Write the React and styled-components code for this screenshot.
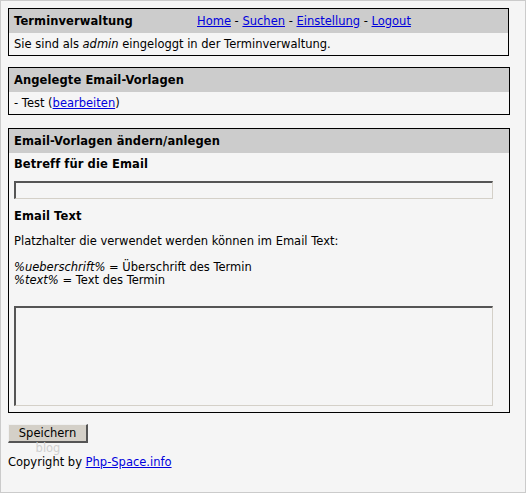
import React from 'react';
import styled, { createGlobalStyle } from 'styled-components';

const Global = createGlobalStyle`
  html, body {
    margin: 0;
    padding: 0;
    background: #f5f5f5;
  }
  body {
    font-family: Verdana, "DejaVu Sans", sans-serif;
    font-size: 11.5px;
    line-height: 13px;
    color: #000;
  }
`;

const Page = styled.div`
  box-sizing: border-box;
  min-height: 100vh;
  border: 1px solid #cbcbcb;
  padding: 7px;
  display: flex;
  flex-direction: column;
`;

const Box = styled.div`
  width: ${props => props.width || 502}px;
  box-sizing: border-box;
  border: 1px solid #000;
  margin-bottom: ${props => props.gap || 0}px;
`;

const Head = styled.div`
  height: 24px;
  background: #cccccc;
  display: flex;
  align-items: center;
  padding: 0 5px;
  font-weight: bold;
  letter-spacing: 0.1px;
`;

const Title = styled.span`
  width: 183px;
`;

const Nav = styled.span`
  font-weight: normal;
  letter-spacing: 0;
`;

const Link = styled.a`
  color: #0000dd;
  text-decoration: underline;
`;

const Row = styled.div`
  height: 22px;
  display: flex;
  align-items: center;
  padding: 0 5px;
`;

const Form = styled.div`
  display: flex;
  flex-direction: column;
  padding: 5px 5px 6px;
`;

const Label = styled.div`
  font-weight: bold;
  letter-spacing: 0.1px;
  margin-bottom: ${props => props.gap}px;
`;

const Text = styled.div`
  margin-bottom: ${props => props.gap || 0}px;
`;

const Field = styled.input`
  box-sizing: border-box;
  width: 479px;
  height: 18px;
  margin: 0 0 11px;
  padding: 0 2px;
  background: #f5f5f5;
  border-style: solid;
  border-width: 2px 1px 1px 2px;
  border-color: #555 #d4d0c8 #d4d0c8 #555;
  font: inherit;
`;

const Area = styled.textarea`
  box-sizing: border-box;
  width: 479px;
  height: 100px;
  margin: 0;
  padding: 2px;
  background: #f5f5f5;
  border-style: solid;
  border-width: 2px 1px 1px 2px;
  border-color: #555 #d4d0c8 #d4d0c8 #555;
  font: inherit;
  resize: none;
  display: block;
`;

const Button = styled.button`
  box-sizing: border-box;
  width: 80px;
  height: 19px;
  margin-top: 11px;
  padding: 0;
  background: #d4d0c8;
  border-style: solid;
  border-width: 1px 2px 2px 1px;
  border-color: #f0f0f0 #555 #555 #f0f0f0;
  font: inherit;
  color: #000;
`;

const Blog = styled.div`
  width: 80px;
  text-align: center;
  color: #d0d0d0;
  height: 8px;
  line-height: 13px;
  margin-top: -1px;
`;

const Footer = styled.div`
  margin-top: 6px;
`;

export default function App() {
  return (
    <>
      <Global />
      <Page>
        <Box width={501} gap={11}>
          <Head>
            <Title>Terminverwaltung</Title>
            <Nav>
              <Link href="#">Home</Link> - <Link href="#">Suchen</Link> - <Link href="#">Einstellung</Link> - <Link href="#">Logout</Link>
            </Nav>
          </Head>
          <Row>Sie sind als&nbsp;<i>admin</i>&nbsp;eingeloggt in der Terminverwaltung.</Row>
        </Box>
        <Box gap={13}>
          <Head>Angelegte Email-Vorlagen</Head>
          <Row>- Test (<Link href="#">bearbeiten</Link>)</Row>
        </Box>
        <Box>
          <Head>Email-Vorlagen ändern/anlegen</Head>
          <Form>
            <Label gap={10}>Betreff für die Email</Label>
            <Field type="text" />
            <Label gap={12}>Email Text</Label>
            <Text gap={13}>Platzhalter die verwendet werden können im Email Text:</Text>
            <Text><i>%ueberschrift%</i> = Überschrift des Termin</Text>
            <Text gap={19}><i>%text%</i> = Text des Termin</Text>
            <Area />
          </Form>
        </Box>
        <Button>Speichern</Button>
        <Blog>blog</Blog>
        <Footer>Copyright by <Link href="#">Php-Space.info</Link></Footer>
      </Page>
    </>
  );
}
